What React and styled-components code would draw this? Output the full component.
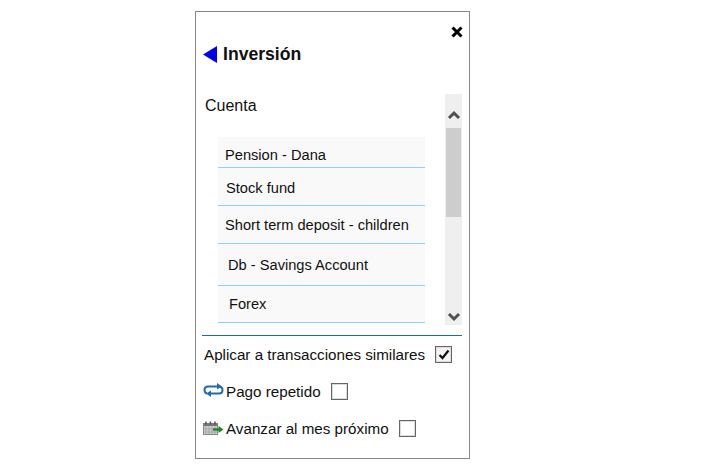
import styled, { createGlobalStyle } from "styled-components"

const accounts = [
    { name: "Pension - Dana", height: 31, indent: 7, pad: 6 },
    { name: "Stock fund", height: 38, indent: 8, pad: 2 },
    { name: "Short term deposit - children", height: 38, indent: 7, pad: 0 },
    { name: "Db - Savings Account", height: 42, indent: 10, pad: 0 },
    { name: "Forex", height: 37, indent: 11, pad: 0 },
]

export default function App() {
    return (<>
        <GlobalStyle />
        <Panel>
            <CloseRow><CloseIcon /></CloseRow>
            <TitleRow>
                <BackArrow />
                <Title>Inversión</Title>
            </TitleRow>
            <ListArea>
                <ListColumn>
                    <Label>Cuenta</Label>
                    <AccountList>
                        {accounts.map(item => (
                            <Account key={item.name} $height={item.height} $indent={item.indent} $pad={item.pad}>{item.name}</Account>
                        ))}
                    </AccountList>
                </ListColumn>
                <ScrollTrack>
                    <ScrollArrow><Chevron d="M2 8 L7 3 L12 8" /></ScrollArrow>
                    <ScrollThumb />
                    <ScrollRest />
                    <ScrollArrow><Chevron d="M2 3 L7 8 L12 3" /></ScrollArrow>
                </ScrollTrack>
            </ListArea>
            <Divider />
            <Option $gap={10}>
                <span>Aplicar a transacciones similares</span>
                <CheckBox $checked>
                    <svg width="12" height="11" viewBox="0 0 12 11"><path d="M1.5 6 L4.5 9 L10.5 1.5" fill="none" stroke="#111" strokeWidth="2.2" /></svg>
                </CheckBox>
            </Option>
            <Option $gap={10}>
                <OptionLabel $gap={2}><IconSlot $lift={3}><RepeatIcon /></IconSlot>Pago repetido</OptionLabel>
                <CheckBox />
            </Option>
            <Option $gap={10}>
                <OptionLabel $gap={2}><IconSlot $lift={1}><CalendarIcon /></IconSlot>Avanzar al mes próximo</OptionLabel>
                <CheckBox />
            </Option>
        </Panel>
    </>
    )
}

function CloseIcon() {
    return (
        <svg width="12" height="12" viewBox="0 0 12 12"><path d="M1.5 1.5 L10.5 10.5 M10.5 1.5 L1.5 10.5" stroke="#000" strokeWidth="3" /></svg>
    )
}

function BackArrow() {
    return (
        <svg width="14" height="17" viewBox="0 0 14 17"><path d="M14 0 L14 17 L0 8.5 Z" fill="#0000f0" /></svg>
    )
}

function Chevron({ d }) {
    return (
        <svg width="14" height="11" viewBox="0 0 14 11"><path d={d} fill="none" stroke="#505050" strokeWidth="3" /></svg>
    )
}

function RepeatIcon() {
    return (
        <svg width="21" height="15" viewBox="0 0 21 15">
            <path d="M14 3.500 H5 Q1.500 3.500 1.500 7 Q1.500 10 4 10.500" fill="none" stroke="#1c6bb8" strokeWidth="2" />
            <path d="M14 0 L19 3.500 L14 6.500 Z" fill="#1c6bb8" />
            <path d="M7 10.500 H16 Q19.500 10.500 19.500 7 Q19.500 4.500 17 3.700" fill="none" stroke="#1c6bb8" strokeWidth="2" />
            <path d="M8 7.500 L3 10.500 L8 14 Z" fill="#1c6bb8" />
        </svg>
    )
}

function CalendarIcon() {
    return (
        <svg width="21" height="14" viewBox="0 0 21 14">
            <rect x="0.5" y="2.500" width="14" height="11" fill="#cfcfcf" stroke="#888" />
            <rect x="0.5" y="2.500" width="14" height="2.500" fill="#777" />
            <path d="M3 0.500 V3.500 M7.500 0.500 V3.500 M12 0.500 V3.500" stroke="#555" strokeWidth="1.500" />
            <path d="M3 5 V13 M6 5 V13 M9 5 V13 M12 5 V13 M1 8 H14 M1 11 H14" stroke="#999" strokeWidth="0.7" />
            <path d="M10 8.500 H17" stroke="#1c8a1c" strokeWidth="2.400" />
            <path d="M15.500 5 L20.500 8.500 L15.500 12 Z" fill="#1c8a1c" />
        </svg>
    )
}

const GlobalStyle = createGlobalStyle`
    html, body {
        margin: 0;
        padding: 0;
        background: #fff;
    }
    body {
        font-family: "Liberation Sans", Arial, sans-serif;
        color: #111;
    }
`
const Panel = styled.div`
    box-sizing: border-box;
    width: 275px;
    height: 448px;
    margin: 11px 0 0 195px;
    border: 1px solid #888;
    padding: 0 7px 0 6px;
    display: flex;
    flex-direction: column;
`
const CloseRow = styled.div`
    display: flex;
    justify-content: flex-end;
    height: 25px;
    padding: 14px 0 0 0;
    box-sizing: border-box;
    margin-right: -1px;
`
const TitleRow = styled.div`
    display: flex;
    align-items: center;
    gap: 6px;
    height: 32px;
    margin: 1px 0 0 1px;
`
const Title = styled.h1`
    margin: 1px 0 0 0;
    font-size: 17.600px;
    font-weight: 700;
    color: #111;
`
const ListArea = styled.div`
    display: flex;
    justify-content: space-between;
    height: 231px;
    margin-top: 24px;
`
const ListColumn = styled.div`
    display: flex;
    flex-direction: column;
`
const Label = styled.div`
    font-size: 16px;
    line-height: 24px;
    height: 43px;
    margin-left: 3px;
`
const AccountList = styled.ul`
    list-style: none;
    margin: 0 0 0 16px;
    padding: 0;
    width: 207px;
`
const Account = styled.li`
    box-sizing: border-box;
    height: ${({ $height }) => $height}px;
    padding: ${({ $pad }) => $pad}px 0 0 ${({ $indent }) => $indent}px;
    display: flex;
    align-items: center;
    background: #f9f9f9;
    border-bottom: 1px solid #8dd3f5;
    font-size: 14.650px;
    color: #111;
`
const ScrollTrack = styled.div`
    width: 17px;
    display: flex;
    flex-direction: column;
    align-items: center;
    background: #efefef;
`
const ScrollArrow = styled.div`
    height: 17px;
    width: 100%;
    flex: none;
    display: flex;
    align-items: center;
    justify-content: center;
    &:first-child {
        height: 34px;
        padding-top: 9px;
        box-sizing: border-box;
    }
`
const ScrollThumb = styled.div`
    width: 15px;
    height: 89px;
    flex: none;
    background: #cdcdcd;
`
const ScrollRest = styled.div`
    flex: 1;
`
const Divider = styled.div`
    height: 1px;
    margin-top: 10px;
    background: #1a6f9f;
`
const Option = styled.div`
    display: flex;
    align-items: center;
    gap: ${({ $gap }) => $gap}px;
    height: 37px;
    padding: 0 0 0 2px;
    font-size: 15.200px;
    color: #111;
`
const OptionLabel = styled.span`
    display: flex;
    align-items: center;
    gap: ${({ $gap }) => $gap}px;
    margin-left: -1px;
`
const IconSlot = styled.span`
    display: flex;
    width: 21px;
    margin-bottom: ${({ $lift }) => $lift}px;
`
const CheckBox = styled.span`
    box-sizing: border-box;
    width: 17px;
    height: 17px;
    flex: none;
    display: flex;
    align-items: center;
    justify-content: center;
    border: 1px solid #666;
    background: ${({ $checked }) => $checked ? "#f4f4f4" : "#fff"};
    box-shadow: inset 0 0 0 1px #dcdcdc;
`
